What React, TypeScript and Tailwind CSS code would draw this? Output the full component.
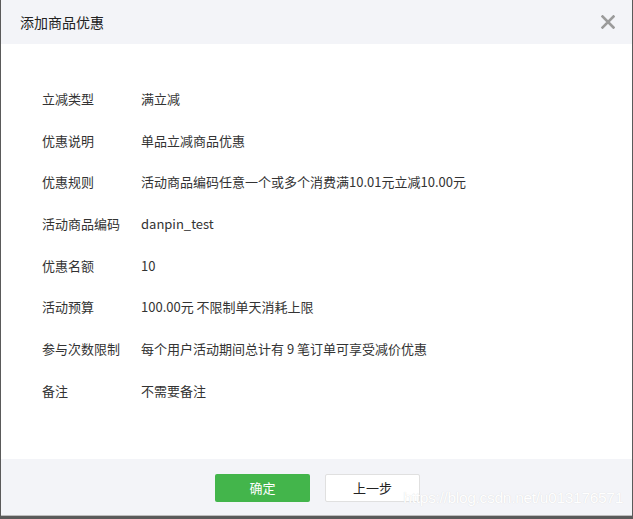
const rows: [string, string][] = [
  ["立减类型", "满立减"],
  ["优惠说明", "单品立减商品优惠"],
  ["优惠规则", "活动商品编码任意一个或多个消费满10.01元立减10.00元"],
  ["活动商品编码", "danpin_test"],
  ["优惠名额", "10"],
  ["活动预算", "100.00元 不限制单天消耗上限"],
  ["参与次数限制", "每个用户活动期间总计有 9 笔订单可享受减价优惠"],
  ["备注", "不需要备注"],
];

export default function App() {
  return (
    <div
      className="relative flex h-[519px] w-[633px] flex-col overflow-hidden bg-[#5a5a5a] text-[#333]"
      style={{ fontFamily: '"Microsoft YaHei", "Noto Sans CJK SC", sans-serif' }}
    >
      <div className="mx-px flex h-[516px] flex-col border-b border-[#bdbdbd] bg-white">
        {/* Header */}
        <div className="flex h-[44px] shrink-0 items-center justify-between bg-[#f3f4f8] pl-[19px] pr-[17px]">
          <span className="text-[14px] text-[#222]">添加商品优惠</span>
          <svg width="14" height="14" viewBox="0 0 14 14" className="text-[#9b9b9b]">
            <path d="M1.5 1.5 L12.5 12.5 M12.5 1.5 L1.5 12.5" stroke="currentColor" strokeWidth="2.6" strokeLinecap="square" />
          </svg>
        </div>

        {/* Body */}
        <div className="flex flex-1 flex-col pl-[41px] pt-[45px]">
          {rows.map(([label, value]) => (
            <div key={label} className="flex h-[41.7px] text-[13px] leading-[20px]">
              <span className="w-[99px] shrink-0 text-[#333]">{label}</span>
              <span className="text-[#333]">{value}</span>
            </div>
          ))}
        </div>

        {/* Footer */}
        <div className="flex h-[56px] shrink-0 items-start justify-center gap-[15px] bg-[#f3f4f8] pt-[15px] pl-[2px]">
          <button className="h-[28px] w-[95px] rounded-[2px] bg-[#43b54b] text-[13px] text-white">确定</button>
          <button className="h-[28px] w-[95px] rounded-[2px] border border-[#e0e0e0] bg-white text-[13px] text-[#222]">上一步</button>
        </div>
      </div>

      <span
        className="pointer-events-none absolute right-[10px] top-[486px] whitespace-nowrap text-[15.5px] tracking-[-0.3px] text-white"
        style={{ fontFamily: '"Liberation Sans", Arial, sans-serif', textShadow: "0 0 1px #d4d4d4" }}
      >
        https://blog.csdn.net/u013176571
      </span>
    </div>
  );
}
